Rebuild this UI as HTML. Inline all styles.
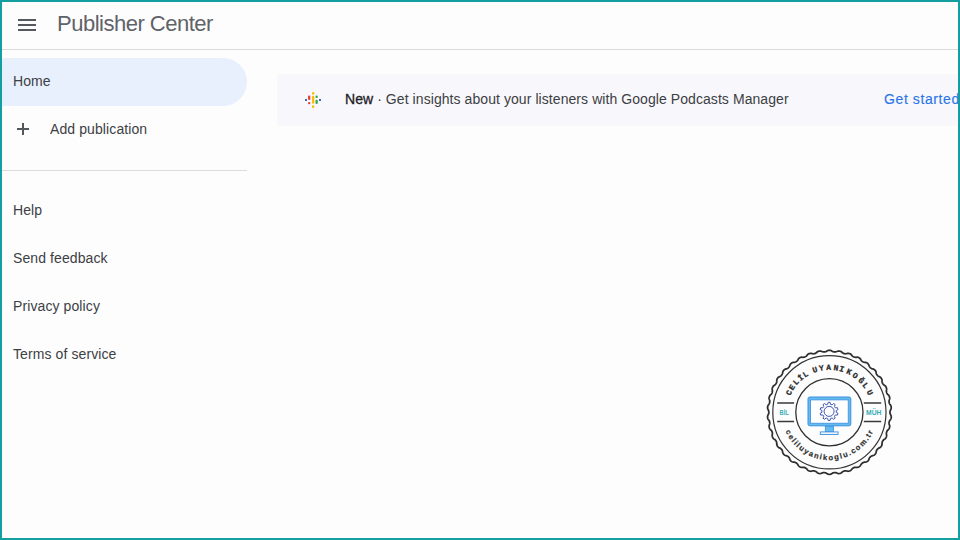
<!DOCTYPE html>
<html><head><meta charset="utf-8">
<style>
*{margin:0;padding:0;box-sizing:border-box}
html,body{width:960px;height:540px;overflow:hidden;background:#fefdfe}
body{position:relative;font-family:"Liberation Sans",sans-serif;color:#3c4043}
.frame{position:absolute;left:0;top:0;width:960px;height:540px;border:2px solid #139ea1;z-index:10;pointer-events:none}
.hdr{position:absolute;left:0;top:0;width:960px;height:50px;border-bottom:1px solid #dadce0}
.ham{position:absolute;left:18px;width:18px;height:2px;background:#55585c}
.title{position:absolute;left:57px;top:10px;font-size:22px;line-height:28px;color:#5f6368;letter-spacing:-0.5px;white-space:nowrap}
.pill{position:absolute;left:0;top:58px;width:247px;height:48px;background:#e8f0fe;border-radius:0 24px 24px 0}
.nav{position:absolute;left:13px;font-size:14px;line-height:16px;color:#3c4043;white-space:nowrap;letter-spacing:0.1px}
.plus{position:absolute;left:17px;top:123px;width:12px;height:12px}
.plus:before{content:"";position:absolute;left:5px;top:0;width:2px;height:12px;background:#54575b}
.plus:after{content:"";position:absolute;left:0;top:5px;width:12px;height:2px;background:#54575b}
.sep{position:absolute;left:0;top:170px;width:247px;height:1px;background:#dadce0}
.banner{position:absolute;left:277px;top:74px;width:700px;height:52px;background:#f8f7fc;border-radius:4px}
.btxt{position:absolute;left:345px;top:91px;font-size:14px;line-height:16px;color:#3c4043;white-space:nowrap;letter-spacing:0.07px}
.btxt b{color:#202124;font-weight:normal;-webkit-text-stroke:0.3px #202124}
.gs{position:absolute;left:884px;top:91px;font-size:14px;line-height:16px;color:#2a76e6;-webkit-text-stroke:0.15px #2a76e6;white-space:nowrap;letter-spacing:0.6px}
</style></head><body>
<div class="hdr">
  <div class="ham" style="top:19px"></div>
  <div class="ham" style="top:24px"></div>
  <div class="ham" style="top:29px"></div>
  <div class="title">Publisher Center</div>
</div>
<div class="pill"></div>
<div class="nav" style="top:73px">Home</div>
<div class="plus"></div>
<div class="nav" style="left:50px;top:121px">Add publication</div>
<div class="sep"></div>
<div class="nav" style="top:202px">Help</div>
<div class="nav" style="top:250px">Send feedback</div>
<div class="nav" style="top:298px">Privacy policy</div>
<div class="nav" style="top:346px">Terms of service</div>

<div class="banner"></div>
<svg style="position:absolute;left:300px;top:88px" width="26" height="24" viewBox="300 88 26 24">
  <rect x="305" y="99" width="2" height="2" fill="#4267b2"/>
  <rect x="308" y="95.5" width="2.3" height="4.5" rx="1" fill="#ea4335"/>
  <rect x="308" y="102" width="2.3" height="2.3" rx="1" fill="#ea4335"/>
  <rect x="312" y="92" width="2.3" height="2.7" rx="1" fill="#fbbc04"/>
  <rect x="312" y="95.8" width="2.3" height="8" rx="1" fill="#fbbc04"/>
  <rect x="312" y="105.3" width="2.3" height="2.6" rx="1" fill="#fbbc04"/>
  <rect x="315.5" y="95.5" width="2.3" height="2.5" rx="1" fill="#34a853"/>
  <rect x="315.5" y="99.7" width="2.3" height="4.3" rx="1" fill="#34a853"/>
  <rect x="319" y="99" width="2" height="2" fill="#4267b2"/>
</svg>
<div class="btxt"><b>New</b> · Get insights about your listeners with Google Podcasts Manager</div>
<div class="gs">Get started</div>

<!--STAMP--><svg style="position:absolute;left:0;top:0" width="960" height="540" viewBox="0 0 960 540"><path d="M829.4 350.25 L829.94 350.28 L830.48 350.37 L831.02 350.53 L831.55 350.76 L832.07 351.19 L832.59 351.48 L833.11 351.69 L833.63 351.84 L834.15 351.93 L834.68 351.97 L835.21 351.96 L835.75 351.9 L836.3 351.78 L836.86 351.57 L837.44 351.24 L838 351.1 L838.56 351.04 L839.1 351.04 L839.64 351.1 L840.17 351.22 L840.69 351.41 L841.19 351.65 L841.67 351.97 L842.11 352.49 L842.58 352.85 L843.06 353.14 L843.55 353.37 L844.05 353.54 L844.56 353.67 L845.09 353.74 L845.63 353.77 L846.19 353.74 L846.78 353.62 L847.41 353.39 L847.99 353.35 L848.54 353.39 L849.08 353.48 L849.6 353.63 L850.1 353.84 L850.58 354.11 L851.03 354.44 L851.46 354.84 L851.8 355.43 L852.21 355.85 L852.63 356.21 L853.08 356.51 L853.55 356.77 L854.03 356.97 L854.54 357.13 L855.07 357.24 L855.63 357.3 L856.24 357.27 L856.89 357.16 L857.46 357.22 L858.01 357.35 L858.52 357.53 L859.01 357.77 L859.46 358.06 L859.89 358.41 L860.28 358.81 L860.63 359.28 L860.87 359.92 L861.2 360.4 L861.57 360.82 L861.96 361.19 L862.38 361.52 L862.83 361.8 L863.3 362.03 L863.81 362.23 L864.36 362.38 L864.97 362.43 L865.62 362.44 L866.18 362.6 L866.69 362.82 L867.16 363.09 L867.6 363.4 L868 363.77 L868.36 364.19 L868.68 364.65 L868.94 365.17 L869.08 365.84 L869.33 366.37 L869.62 366.84 L869.95 367.27 L870.31 367.66 L870.71 368.01 L871.14 368.32 L871.61 368.59 L872.13 368.82 L872.75 368.95 L873.37 369.09 L873.88 369.35 L874.35 369.65 L874.77 369.99 L875.15 370.38 L875.48 370.81 L875.76 371.28 L876 371.79 L876.17 372.36 L876.19 373.04 L876.35 373.6 L876.57 374.11 L876.82 374.58 L877.12 375.02 L877.45 375.43 L877.83 375.8 L878.25 376.15 L878.73 376.46 L879.34 376.68 L879.9 376.94 L880.37 377.27 L880.77 377.65 L881.13 378.06 L881.44 378.51 L881.69 378.99 L881.89 379.5 L882.03 380.05 L882.11 380.63 L882.02 381.31 L882.09 381.88 L882.22 382.42 L882.39 382.93 L882.61 383.41 L882.88 383.86 L883.2 384.3 L883.56 384.71 L883.98 385.09 L884.56 385.4 L885.06 385.75 L885.46 386.16 L885.79 386.6 L886.07 387.07 L886.3 387.56 L886.47 388.08 L886.58 388.62 L886.63 389.18 L886.59 389.77 L886.4 390.42 L886.38 391 L886.42 391.55 L886.51 392.08 L886.65 392.59 L886.84 393.08 L887.08 393.56 L887.38 394.02 L887.73 394.47 L888.27 394.86 L888.69 395.3 L889.01 395.77 L889.27 396.26 L889.46 396.77 L889.6 397.29 L889.68 397.83 L889.7 398.38 L889.65 398.94 L889.51 399.52 L889.21 400.13 L889.1 400.7 L889.06 401.24 L889.06 401.78 L889.12 402.31 L889.23 402.82 L889.39 403.33 L889.61 403.84 L889.89 404.34 L890.36 404.82 L890.69 405.32 L890.93 405.83 L891.1 406.36 L891.21 406.89 L891.25 407.43 L891.24 407.98 L891.16 408.52 L891.02 409.07 L890.78 409.62 L890.39 410.17 L890.19 410.71 L890.06 411.24 L889.98 411.77 L889.95 412.3 L889.98 412.83 L890.06 413.36 L890.19 413.89 L890.39 414.43 L890.78 414.98 L891.02 415.53 L891.16 416.08 L891.24 416.62 L891.25 417.17 L891.21 417.71 L891.1 418.24 L890.93 418.77 L890.69 419.28 L890.36 419.78 L889.89 420.26 L889.61 420.76 L889.39 421.27 L889.23 421.78 L889.12 422.29 L889.06 422.82 L889.06 423.36 L889.1 423.9 L889.21 424.47 L889.51 425.08 L889.65 425.66 L889.7 426.22 L889.68 426.77 L889.6 427.31 L889.46 427.83 L889.27 428.34 L889.01 428.83 L888.69 429.3 L888.27 429.74 L887.73 430.13 L887.38 430.58 L887.08 431.04 L886.84 431.52 L886.65 432.01 L886.51 432.52 L886.42 433.05 L886.38 433.6 L886.4 434.18 L886.59 434.83 L886.63 435.42 L886.58 435.98 L886.47 436.52 L886.3 437.04 L886.07 437.53 L885.79 438 L885.46 438.44 L885.06 438.85 L884.56 439.2 L883.98 439.51 L883.56 439.89 L883.2 440.3 L882.88 440.74 L882.61 441.19 L882.39 441.67 L882.22 442.18 L882.09 442.72 L882.02 443.29 L882.11 443.97 L882.03 444.55 L881.89 445.1 L881.69 445.61 L881.44 446.09 L881.13 446.54 L880.77 446.95 L880.37 447.33 L879.9 447.66 L879.34 447.92 L878.73 448.14 L878.25 448.45 L877.83 448.8 L877.45 449.17 L877.12 449.58 L876.82 450.02 L876.57 450.49 L876.35 451 L876.19 451.56 L876.17 452.24 L876 452.81 L875.76 453.32 L875.48 453.79 L875.15 454.22 L874.77 454.61 L874.35 454.95 L873.88 455.25 L873.37 455.51 L872.75 455.65 L872.13 455.78 L871.61 456.01 L871.14 456.28 L870.71 456.59 L870.31 456.94 L869.95 457.33 L869.62 457.76 L869.33 458.23 L869.08 458.76 L868.94 459.43 L868.68 459.95 L868.36 460.41 L868 460.83 L867.6 461.2 L867.16 461.51 L866.69 461.78 L866.18 462 L865.62 462.16 L864.97 462.17 L864.36 462.22 L863.81 462.37 L863.3 462.57 L862.83 462.8 L862.38 463.08 L861.96 463.41 L861.57 463.78 L861.2 464.2 L860.87 464.68 L860.63 465.32 L860.28 465.79 L859.89 466.19 L859.46 466.54 L859.01 466.83 L858.52 467.07 L858.01 467.25 L857.46 467.38 L856.89 467.44 L856.24 467.33 L855.63 467.3 L855.07 467.36 L854.54 467.47 L854.03 467.63 L853.55 467.83 L853.08 468.09 L852.63 468.39 L852.21 468.75 L851.8 469.17 L851.46 469.76 L851.03 470.16 L850.58 470.49 L850.1 470.76 L849.6 470.97 L849.08 471.12 L848.54 471.21 L847.99 471.25 L847.41 471.21 L846.78 470.98 L846.19 470.86 L845.63 470.83 L845.09 470.86 L844.56 470.93 L844.05 471.06 L843.55 471.23 L843.06 471.46 L842.58 471.75 L842.11 472.11 L841.67 472.63 L841.19 472.95 L840.69 473.19 L840.17 473.38 L839.64 473.5 L839.1 473.56 L838.56 473.56 L838 473.5 L837.44 473.36 L836.86 473.03 L836.3 472.82 L835.75 472.7 L835.21 472.64 L834.68 472.63 L834.15 472.67 L833.63 472.76 L833.11 472.91 L832.59 473.12 L832.07 473.41 L831.55 473.84 L831.02 474.07 L830.48 474.23 L829.94 474.32 L829.4 474.35 L828.86 474.32 L828.32 474.23 L827.78 474.07 L827.25 473.84 L826.73 473.41 L826.21 473.12 L825.69 472.91 L825.17 472.76 L824.65 472.67 L824.12 472.63 L823.59 472.64 L823.05 472.7 L822.5 472.82 L821.94 473.03 L821.36 473.36 L820.8 473.5 L820.24 473.56 L819.7 473.56 L819.16 473.5 L818.63 473.38 L818.11 473.19 L817.61 472.95 L817.13 472.63 L816.69 472.11 L816.22 471.75 L815.74 471.46 L815.25 471.23 L814.75 471.06 L814.24 470.93 L813.71 470.86 L813.17 470.83 L812.61 470.86 L812.02 470.98 L811.39 471.21 L810.81 471.25 L810.26 471.21 L809.72 471.12 L809.2 470.97 L808.7 470.76 L808.22 470.49 L807.77 470.16 L807.34 469.76 L807 469.17 L806.59 468.75 L806.17 468.39 L805.72 468.09 L805.25 467.83 L804.77 467.63 L804.26 467.47 L803.73 467.36 L803.17 467.3 L802.56 467.33 L801.91 467.44 L801.34 467.38 L800.79 467.25 L800.28 467.07 L799.79 466.83 L799.34 466.54 L798.91 466.19 L798.52 465.79 L798.17 465.32 L797.93 464.68 L797.6 464.2 L797.23 463.78 L796.84 463.41 L796.42 463.08 L795.97 462.8 L795.5 462.57 L794.99 462.37 L794.44 462.22 L793.83 462.17 L793.18 462.16 L792.62 462 L792.11 461.78 L791.64 461.51 L791.2 461.2 L790.8 460.83 L790.44 460.41 L790.12 459.95 L789.86 459.43 L789.72 458.76 L789.47 458.23 L789.18 457.76 L788.85 457.33 L788.49 456.94 L788.09 456.59 L787.66 456.28 L787.19 456.01 L786.67 455.78 L786.05 455.65 L785.43 455.51 L784.92 455.25 L784.45 454.95 L784.03 454.61 L783.65 454.22 L783.32 453.79 L783.04 453.32 L782.8 452.81 L782.63 452.24 L782.61 451.56 L782.45 451 L782.23 450.49 L781.98 450.02 L781.68 449.58 L781.35 449.17 L780.97 448.8 L780.55 448.45 L780.07 448.14 L779.46 447.92 L778.9 447.66 L778.43 447.33 L778.03 446.95 L777.67 446.54 L777.36 446.09 L777.11 445.61 L776.91 445.1 L776.77 444.55 L776.69 443.97 L776.78 443.29 L776.71 442.72 L776.58 442.18 L776.41 441.67 L776.19 441.19 L775.92 440.74 L775.6 440.3 L775.24 439.89 L774.82 439.51 L774.24 439.2 L773.74 438.85 L773.34 438.44 L773.01 438 L772.73 437.53 L772.5 437.04 L772.33 436.52 L772.22 435.98 L772.17 435.42 L772.21 434.83 L772.4 434.18 L772.42 433.6 L772.38 433.05 L772.29 432.52 L772.15 432.01 L771.96 431.52 L771.72 431.04 L771.42 430.58 L771.07 430.13 L770.53 429.74 L770.11 429.3 L769.79 428.83 L769.53 428.34 L769.34 427.83 L769.2 427.31 L769.12 426.77 L769.1 426.22 L769.15 425.66 L769.29 425.08 L769.59 424.47 L769.7 423.9 L769.74 423.36 L769.74 422.82 L769.68 422.29 L769.57 421.78 L769.41 421.27 L769.19 420.76 L768.91 420.26 L768.44 419.78 L768.11 419.28 L767.87 418.77 L767.7 418.24 L767.59 417.71 L767.55 417.17 L767.56 416.62 L767.64 416.08 L767.78 415.53 L768.02 414.98 L768.41 414.43 L768.61 413.89 L768.74 413.36 L768.82 412.83 L768.85 412.3 L768.82 411.77 L768.74 411.24 L768.61 410.71 L768.41 410.17 L768.02 409.62 L767.78 409.07 L767.64 408.52 L767.56 407.98 L767.55 407.43 L767.59 406.89 L767.7 406.36 L767.87 405.83 L768.11 405.32 L768.44 404.82 L768.91 404.34 L769.19 403.84 L769.41 403.33 L769.57 402.82 L769.68 402.31 L769.74 401.78 L769.74 401.24 L769.7 400.7 L769.59 400.13 L769.29 399.52 L769.15 398.94 L769.1 398.38 L769.12 397.83 L769.2 397.29 L769.34 396.77 L769.53 396.26 L769.79 395.77 L770.11 395.3 L770.53 394.86 L771.07 394.47 L771.42 394.02 L771.72 393.56 L771.96 393.08 L772.15 392.59 L772.29 392.08 L772.38 391.55 L772.42 391 L772.4 390.42 L772.21 389.77 L772.17 389.18 L772.22 388.62 L772.33 388.08 L772.5 387.56 L772.73 387.07 L773.01 386.6 L773.34 386.16 L773.74 385.75 L774.24 385.4 L774.82 385.09 L775.24 384.71 L775.6 384.3 L775.92 383.86 L776.19 383.41 L776.41 382.93 L776.58 382.42 L776.71 381.88 L776.78 381.31 L776.69 380.63 L776.77 380.05 L776.91 379.5 L777.11 378.99 L777.36 378.51 L777.67 378.06 L778.03 377.65 L778.43 377.27 L778.9 376.94 L779.46 376.68 L780.07 376.46 L780.55 376.15 L780.97 375.8 L781.35 375.43 L781.68 375.02 L781.98 374.58 L782.23 374.11 L782.45 373.6 L782.61 373.04 L782.63 372.36 L782.8 371.79 L783.04 371.28 L783.32 370.81 L783.65 370.38 L784.03 369.99 L784.45 369.65 L784.92 369.35 L785.43 369.09 L786.05 368.95 L786.67 368.82 L787.19 368.59 L787.66 368.32 L788.09 368.01 L788.49 367.66 L788.85 367.27 L789.18 366.84 L789.47 366.37 L789.72 365.84 L789.86 365.17 L790.12 364.65 L790.44 364.19 L790.8 363.77 L791.2 363.4 L791.64 363.09 L792.11 362.82 L792.62 362.6 L793.18 362.44 L793.83 362.43 L794.44 362.38 L794.99 362.23 L795.5 362.03 L795.97 361.8 L796.42 361.52 L796.84 361.19 L797.23 360.82 L797.6 360.4 L797.93 359.92 L798.17 359.28 L798.52 358.81 L798.91 358.41 L799.34 358.06 L799.79 357.77 L800.28 357.53 L800.79 357.35 L801.34 357.22 L801.91 357.16 L802.56 357.27 L803.17 357.3 L803.73 357.24 L804.26 357.13 L804.77 356.97 L805.25 356.77 L805.72 356.51 L806.17 356.21 L806.59 355.85 L807 355.43 L807.34 354.84 L807.77 354.44 L808.22 354.11 L808.7 353.84 L809.2 353.63 L809.72 353.48 L810.26 353.39 L810.81 353.35 L811.39 353.39 L812.02 353.62 L812.61 353.74 L813.17 353.77 L813.71 353.74 L814.24 353.67 L814.75 353.54 L815.25 353.37 L815.74 353.14 L816.22 352.85 L816.69 352.49 L817.13 351.97 L817.61 351.65 L818.11 351.41 L818.63 351.22 L819.16 351.1 L819.7 351.04 L820.24 351.04 L820.8 351.1 L821.36 351.24 L821.94 351.57 L822.5 351.78 L823.05 351.9 L823.59 351.96 L824.12 351.97 L824.65 351.93 L825.17 351.84 L825.69 351.69 L826.21 351.48 L826.73 351.19 L827.25 350.76 L827.78 350.53 L828.32 350.37 L828.86 350.28 L829.4 350.25Z" fill="none" stroke="#2f2f2f" stroke-width="1.75"/>
<circle cx="829.4" cy="412.3" r="56.6" fill="none" stroke="#333" stroke-width="1.2"/>
<circle cx="829.4" cy="412.3" r="33.6" fill="none" stroke="#2f2f2f" stroke-width="1.3"/>
<path d="M777.2 403 H794.1 M863.8 403 H881.2" stroke="#3a3a3a" stroke-width="1.5"/>
<path d="M777.2 421.5 H794.1 M863.8 421.5 H881.2" stroke="#3a3a3a" stroke-width="1.5"/>
<g font-family="Liberation Mono" font-weight="bold" font-size="8" fill="#2b2b2b" stroke="#2b2b2b" stroke-width="0.25" text-anchor="middle"><text x="829.4" y="369.9" transform="rotate(-64 829.4 412.3)">C</text><text x="829.4" y="369.9" transform="rotate(-56.3 829.4 412.3)">E</text><text x="829.4" y="369.9" transform="rotate(-47.8 829.4 412.3)">L</text><text x="829.4" y="369.9" transform="rotate(-39.8 829.4 412.3)">İ</text><text x="829.4" y="369.9" transform="rotate(-32.3 829.4 412.3)">L</text><text x="829.4" y="369.9" transform="rotate(-18.8 829.4 412.3)">U</text><text x="829.4" y="369.9" transform="rotate(-10.1 829.4 412.3)">Y</text><text x="829.4" y="369.9" transform="rotate(-1.1 829.4 412.3)">A</text><text x="829.4" y="369.9" transform="rotate(8.4 829.4 412.3)">N</text><text x="829.4" y="369.9" transform="rotate(16 829.4 412.3)">I</text><text x="829.4" y="369.9" transform="rotate(25.8 829.4 412.3)">K</text><text x="829.4" y="369.9" transform="rotate(35.1 829.4 412.3)">O</text><text x="829.4" y="369.9" transform="rotate(45.1 829.4 412.3)">Ğ</text><text x="829.4" y="369.9" transform="rotate(53.3 829.4 412.3)">L</text><text x="829.4" y="369.9" transform="rotate(64.1 829.4 412.3)">U</text></g>
<g font-family="Liberation Sans" font-weight="bold" font-size="7.6" fill="#333" stroke="#333" stroke-width="0.2" text-anchor="middle"><text x="829.4" y="460.1" transform="rotate(64 829.4 412.3)">c</text><text x="829.4" y="460.1" transform="rotate(57.18 829.4 412.3)">e</text><text x="829.4" y="460.1" transform="rotate(51.69 829.4 412.3)">l</text><text x="829.4" y="460.1" transform="rotate(47.53 829.4 412.3)">i</text><text x="829.4" y="460.1" transform="rotate(43.36 829.4 412.3)">l</text><text x="829.4" y="460.1" transform="rotate(37.61 829.4 412.3)">u</text><text x="829.4" y="460.1" transform="rotate(30.53 829.4 412.3)">y</text><text x="829.4" y="460.1" transform="rotate(23.71 829.4 412.3)">a</text><text x="829.4" y="460.1" transform="rotate(16.63 829.4 412.3)">n</text><text x="829.4" y="460.1" transform="rotate(10.88 829.4 412.3)">i</text><text x="829.4" y="460.1" transform="rotate(5.39 829.4 412.3)">k</text><text x="829.4" y="460.1" transform="rotate(-1.69 829.4 412.3)">o</text><text x="829.4" y="460.1" transform="rotate(-9.04 829.4 412.3)">g</text><text x="829.4" y="460.1" transform="rotate(-14.79 829.4 412.3)">l</text><text x="829.4" y="460.1" transform="rotate(-20.54 829.4 412.3)">u</text><text x="829.4" y="460.1" transform="rotate(-26.29 829.4 412.3)">.</text><text x="829.4" y="460.1" transform="rotate(-31.78 829.4 412.3)">c</text><text x="829.4" y="460.1" transform="rotate(-38.87 829.4 412.3)">o</text><text x="829.4" y="460.1" transform="rotate(-47.54 829.4 412.3)">m</text><text x="829.4" y="460.1" transform="rotate(-54.62 829.4 412.3)">.</text><text x="829.4" y="460.1" transform="rotate(-59.04 829.4 412.3)">t</text><text x="829.4" y="460.1" transform="rotate(-64 829.4 412.3)">r</text></g>
<g font-family="Liberation Sans" font-size="7.6" font-weight="bold" fill="#35adb6" text-anchor="middle"><text x="784.2" y="415.3" textLength="9.2" lengthAdjust="spacingAndGlyphs">BİL</text><text x="873.7" y="415.3" textLength="15.4" lengthAdjust="spacingAndGlyphs">MÜH</text></g>
<rect x="808" y="397" width="42.8" height="28.8" rx="1.8" fill="#64bbf0" stroke="#3b8fdc" stroke-width="1"/>
<rect x="810.6" y="399.9" width="37.6" height="23.3" fill="#fff" stroke="#3d8ddb" stroke-width="0.8"/>
<rect x="825.3" y="426.3" width="8.2" height="5.4" fill="#64bbf0" stroke="#3b8fdc" stroke-width="0.8"/>
<rect x="820.3" y="431.9" width="17.8" height="2.6" fill="#eef6fd" stroke="#3d8ddb" stroke-width="0.9"/>
<path d="M827.66 404.35 L828.13 402.35 L830.07 402.35 L830.54 404.35 L832.08 404.85 L833.63 403.51 L835.2 404.65 L834.41 406.54 L835.37 407.85 L837.41 407.68 L838.01 409.53 L836.25 410.59 L836.25 412.21 L838.01 413.27 L837.41 415.12 L835.37 414.95 L834.41 416.26 L835.2 418.15 L833.63 419.29 L832.08 417.95 L830.54 418.45 L830.07 420.45 L828.13 420.45 L827.66 418.45 L826.12 417.95 L824.57 419.29 L823 418.15 L823.79 416.26 L822.83 414.95 L820.79 415.12 L820.19 413.27 L821.95 412.21 L821.95 410.59 L820.19 409.53 L820.79 407.68 L822.83 407.85 L823.79 406.54 L823 404.65 L824.57 403.51 L826.12 404.85Z" fill="none" stroke="#3d55b0" stroke-width="1" stroke-linejoin="round"/>
<circle cx="829.1" cy="411.4" r="5.0" fill="none" stroke="#3d55b0" stroke-width="1"/></svg><!--/STAMP-->
<div class="frame"></div>
</body></html>
